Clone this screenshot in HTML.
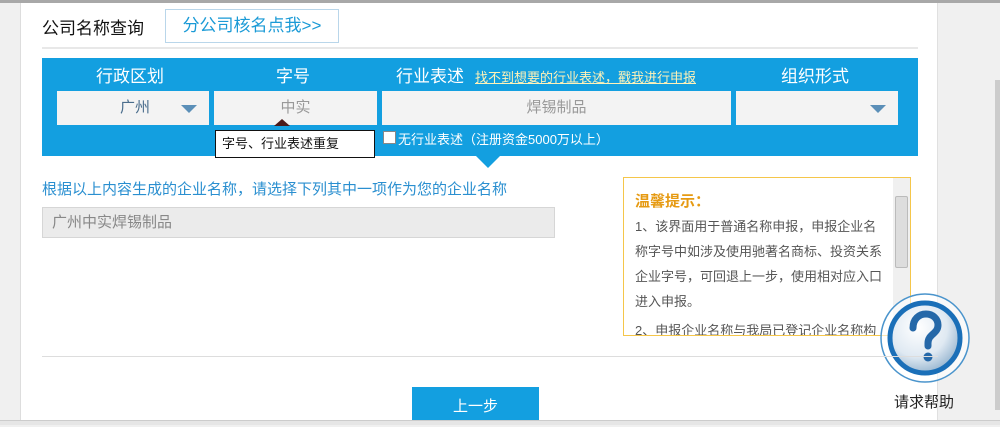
<!DOCTYPE html><html><head><meta charset="utf-8"><style>
*{margin:0;padding:0;box-sizing:border-box}
body{width:1000px;height:425px;background:#f0f0f0;position:relative;overflow:hidden;font-family:"Liberation Sans","Noto Sans CJK SC",sans-serif}
.a{position:absolute}
.sel{position:absolute;top:91px;height:34px;background:#f3f3f3;color:#999;font-size:15px;text-align:center;line-height:34px}
.hd{position:absolute;top:62px;color:#fff;font-size:17px}
.tri{position:absolute;width:0;height:0;border-left:8px solid transparent;border-right:8px solid transparent;border-top:8px solid #5b8fb8}
</style></head><body>
<div class="a" style="left:0;top:0;width:1000px;height:3px;background:#a8a8a8"></div>
<div class="a" style="left:20px;top:3px;width:918px;height:417px;background:#fff;border-left:1px solid #ddd"></div>
<div class="a" style="left:937px;top:3px;width:1px;height:417px;background:#e0e0e0"></div>
<div class="a" style="left:995px;top:80px;width:5px;height:330px;background:#ccc"></div>
<div class="a" style="left:0;top:420px;width:1000px;height:5px;background:#e6e6e6;border-top:1px solid #ccc"></div>
<div class="a" style="left:42px;top:14px;font-size:17px;color:#111">公司名称查询</div>
<div class="a" style="left:165px;top:9px;width:174px;height:34px;border:1px solid #b9d6ea;color:#1a9ad6;font-size:17px;line-height:32px;text-align:center">分公司核名点我&gt;&gt;</div>
<div class="a" style="left:42px;top:47px;width:876px;height:2px;background:#e8e8e8"></div>
<div class="a" style="left:42px;top:58px;width:876px;height:98px;background:#139fe0"></div>
<div class="a" style="left:476px;top:156px;width:0;height:0;border-left:12px solid transparent;border-right:12px solid transparent;border-top:12px solid #139fe0"></div>
<div class="hd" style="left:96px">行政区划</div>
<div class="hd" style="left:276px">字号</div>
<div class="hd" style="left:396px">行业表述</div>
<div class="a" style="left:475px;top:67px;font-size:13px;color:#fff2b8;text-decoration:underline">找不到想要的行业表述，戳我进行申报</div>
<div class="hd" style="left:781px">组织形式</div>
<div class="sel" style="left:57px;width:152px;color:#4a6d8c;text-align:left;padding-left:63px">广州</div>
<div class="tri" style="left:181px;top:105px"></div>
<div class="sel" style="left:214px;width:163px">中实</div>
<div class="sel" style="left:382px;width:349px">焊锡制品</div>
<div class="sel" style="left:736px;width:162px"></div>
<div class="tri" style="left:870px;top:105px"></div>
<div class="a" style="left:274px;top:119px;width:0;height:0;border-left:8px solid transparent;border-right:8px solid transparent;border-bottom:7px solid #4a1a1a"></div>
<div class="a" style="left:215px;top:130px;width:160px;height:28px;background:#fff;border:1px solid #111;font-size:13px;line-height:26px;padding-left:6px;color:#111">字号、行业表述重复</div>
<div class="a" style="left:383px;top:131px;width:13px;height:13px;background:#fff;border:1px solid #888"></div>
<div class="a" style="left:398px;top:129px;font-size:13px;color:#fff">无行业表述（注册资金5000万以上）</div>
<div class="a" style="left:42px;top:178px;font-size:15px;color:#2a8fd0">根据以上内容生成的企业名称，请选择下列其中一项作为您的企业名称</div>
<div class="a" style="left:42px;top:207px;width:513px;height:31px;background:#ebebeb;border:1px solid #d6d6d6;color:#888;font-size:15px;line-height:29px;padding-left:9px">广州中实焊锡制品</div>
<div class="a" style="left:623px;top:177px;width:288px;height:159px;border:1px solid #f5c64a;background:#fff;overflow:hidden">
<div class="a" style="left:11px;top:12px;font-size:15px;font-weight:bold;color:#e69a12">温馨提示：</div>
<div class="a" style="left:11px;top:36px;width:250px;font-size:13px;line-height:25px;color:#555">1、该界面用于普通名称申报，申报企业名称字号中如涉及使用驰著名商标、投资关系企业字号，可回退上一步，使用相对应入口进入申报。<div style="height:4px"></div>2、申报企业名称与我局已登记企业名称构</div>
<div class="a" style="left:269px;top:0;width:17px;height:158px;background:#f0f0f0"></div>
<div class="a" style="left:271px;top:18px;width:13px;height:72px;background:#ddd;border:1px solid #bbb;border-radius:2px"></div>
</div>
<svg class="a" style="left:879px;top:292px" width="92" height="92" viewBox="0 0 92 92">
<defs><radialGradient id="g" cx="40%" cy="35%" r="70%"><stop offset="0" stop-color="#fff"/><stop offset=".6" stop-color="#dfe9f2"/><stop offset="1" stop-color="#8fb0cc"/></radialGradient></defs>
<circle cx="46" cy="46" r="44" fill="rgba(255,255,255,.6)" stroke="#4a94cc" stroke-width="1.5"/>
<circle cx="46" cy="46" r="35" fill="url(#g)" stroke="#1a6fb8" stroke-width="5"/>
<path d="M34 36c0-9 6-14 13-14s12 5 12 11c0 9-10 9-10 18v3" fill="none" stroke="#2568a8" stroke-width="7" stroke-linecap="round"/>
<circle cx="49" cy="65" r="4.5" fill="#2568a8"/>
</svg>
<div class="a" style="left:42px;top:356px;width:896px;height:1px;background:#ddd"></div>
<div class="a" style="left:412px;top:387px;width:127px;height:33px;background:#139fe0;color:#fff;font-size:15px;text-align:center;line-height:40px">上一步</div>
<div class="a" style="left:894px;top:391px;font-size:15px;color:#222">请求帮助</div>
</body></html>
